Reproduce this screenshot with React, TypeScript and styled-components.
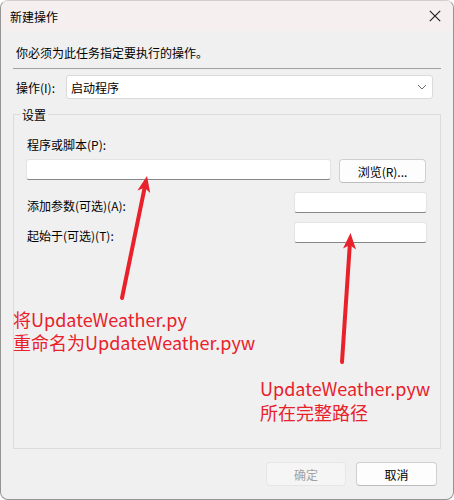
import React from "react";
import styled, { createGlobalStyle } from "styled-components";

const GlobalStyle = createGlobalStyle`
  html, body { margin: 0; padding: 0; background: #ffffff; }
  * { box-sizing: border-box; }
`;

const Window = styled.div`
  position: relative;
  width: 454px;
  height: 500px;
  display: flex;
  flex-direction: column;
  background: #f0f0f0;
  border: 1px solid #949494;
  border-top-color: #d4cfcf;
  border-radius: 8px;
  overflow: hidden;
  font-family: "Noto Sans CJK SC", "Microsoft YaHei", sans-serif;
  font-size: 12px;
  color: #000;
`;

const TitleBar = styled.div`
  height: 30px;
  flex: none;
  display: flex;
  align-items: center;
  justify-content: space-between;
  padding: 0 9px 0 9px;
  background: #f6efef;
`;

const Title = styled.span`
  font-size: 12px;
  line-height: 17px;
`;

const CloseButton = styled.div`
  width: 12px;
  height: 12px;
  margin-right: 3px;
  display: flex;
  align-items: center;
  justify-content: center;
`;

const Body = styled.div`
  flex: 1;
  display: flex;
  flex-direction: column;
  padding: 0 12px;
`;

const Instruction = styled.div`
  margin-top: 13px;
  padding-left: 3px;
  line-height: 17px;
`;

const Separator = styled.div`
  margin-top: 7px;
  height: 1px;
  background: #a0a0a0;
`;

const ActionRow = styled.div`
  margin-top: 6px;
  display: flex;
  align-items: center;
`;

const ActionLabel = styled.span`
  width: 53px;
  padding-left: 3px;
  line-height: 17px;
`;

const Select = styled.div`
  width: 367px;
  height: 24px;
  display: flex;
  align-items: center;
  justify-content: space-between;
  padding: 0 5px 0 4px;
  background: #ffffff;
  border: 1px solid #dadada;
  border-radius: 3px;
  line-height: 17px;
`;

const GroupBox = styled.fieldset`
  flex: 1;
  margin: 7px 0 0 0;
  padding: 0;
  border: 1px solid #dcdcdc;
  border-radius: 0;
  min-width: 0;
`;

const Legend = styled.legend`
  margin-left: 6px;
  padding: 0 2px;
  line-height: 17px;
  font-size: 12px;
`;

const GroupContent = styled.div`
  display: flex;
  flex-direction: column;
  padding: 13px 13px 0 12px;
`;

const FieldLabel = styled.span<{ $offset?: number }>`
  line-height: 17px;
  padding-left: 1px;
  margin-top: ${(p) => p.$offset ?? 0}px;
`;

const ProgramRow = styled.div`
  margin-top: 6px;
  display: flex;
  align-items: flex-start;
  gap: 8px;
`;

const TextBox = styled.div<{ $width: number }>`
  width: ${(p) => p.$width}px;
  height: 21px;
  flex: none;
  background: #ffffff;
  border: 1px solid #e4e4e4;
  border-bottom-color: #878787;
  border-radius: 3px;
`;

const OptionRow = styled.div<{ $gap: number }>`
  margin-top: ${(p) => p.$gap}px;
  display: flex;
  align-items: flex-start;
  justify-content: space-between;
`;

const Button = styled.button<{ $width: number; $disabled?: boolean }>`
  width: ${(p) => p.$width}px;
  height: 24px;
  flex: none;
  padding: 0;
  font-family: inherit;
  font-size: 12px;
  line-height: 17px;
  color: ${(p) => (p.$disabled ? "#a2a2a2" : "#000000")};
  background: ${(p) => (p.$disabled ? "#f5f5f5" : "#fdfdfd")};
  border: 1px solid ${(p) => (p.$disabled ? "#e6e6e6" : "#d0d0d0")};
  border-bottom-color: ${(p) => (p.$disabled ? "#e6e6e6" : "#bcbcbc")};
  border-radius: 4px;
`;

const Footer = styled.div`
  flex: none;
  display: flex;
  justify-content: flex-end;
  gap: 10px;
  padding: 13px 4px 13px 0;
`;

const Overlay = styled.svg`
  position: absolute;
  left: -1px;
  top: -1px;
  width: 454px;
  height: 500px;
  pointer-events: none;
`;

const Note = styled.div<{ $left: number; $top: number; $lh: number }>`
  position: absolute;
  left: ${(p) => p.$left}px;
  top: ${(p) => p.$top}px;
  font-size: 18px;
  line-height: ${(p) => p.$lh}px;
  color: #e8212a;
  white-space: nowrap;
`;

const RED = "#e8212a";

export default function App() {
  return (
    <>
      <GlobalStyle />
      <Window>
        <TitleBar>
          <Title>新建操作</Title>
          <CloseButton>
            <svg width="12" height="12" viewBox="0 0 12 12">
              <path d="M0.8 0.8 L11.2 11.2 M11.2 0.8 L0.8 11.2" stroke="#1a1a1a" strokeWidth="1.1" fill="none" />
            </svg>
          </CloseButton>
        </TitleBar>
        <Body>
          <Instruction>你必须为此任务指定要执行的操作。</Instruction>
          <Separator />
          <ActionRow>
            <ActionLabel>操作(I):</ActionLabel>
            <Select>
              <span>启动程序</span>
              <svg width="10" height="6" viewBox="0 0 10 6">
                <path d="M1 1 L5 5 L9 1" stroke="#6a6a6a" strokeWidth="1" fill="none" />
              </svg>
            </Select>
          </ActionRow>
          <GroupBox>
            <Legend>设置</Legend>
            <GroupContent>
              <FieldLabel>程序或脚本(P):</FieldLabel>
              <ProgramRow>
                <TextBox $width={305} />
                <Button $width={87}>浏览(R)...</Button>
              </ProgramRow>
              <OptionRow $gap={9}>
                <FieldLabel $offset={5}>添加参数(可选)(A):</FieldLabel>
                <TextBox $width={133} />
              </OptionRow>
              <OptionRow $gap={8}>
                <FieldLabel $offset={5}>起始于(可选)(T):</FieldLabel>
                <TextBox $width={133} />
              </OptionRow>
            </GroupContent>
          </GroupBox>
          <Footer>
            <Button $width={80} $disabled>确定</Button>
            <Button $width={81}>取消</Button>
          </Footer>
        </Body>

        <Overlay viewBox="0 0 454 500">
          <line x1="122" y1="298" x2="144.6" y2="187.8" stroke={RED} strokeWidth="4" strokeLinecap="round" />
          <polygon points="147,176 150.2,193 144.6,187.8 137.4,190.4" fill={RED} />
          <line x1="342" y1="362" x2="349.8" y2="245" stroke={RED} strokeWidth="4" strokeLinecap="round" />
          <polygon points="350.5,233 356,249.4 349.8,245 343,248.6" fill={RED} />
        </Overlay>
        <Note $left={12} $top={307} $lh={23}>
          将UpdateWeather.py
          <br />
          重命名为UpdateWeather.pyw
        </Note>
        <Note $left={259} $top={375} $lh={24}>
          UpdateWeather.pyw
          <br />
          所在完整路径
        </Note>
      </Window>
    </>
  );
}
